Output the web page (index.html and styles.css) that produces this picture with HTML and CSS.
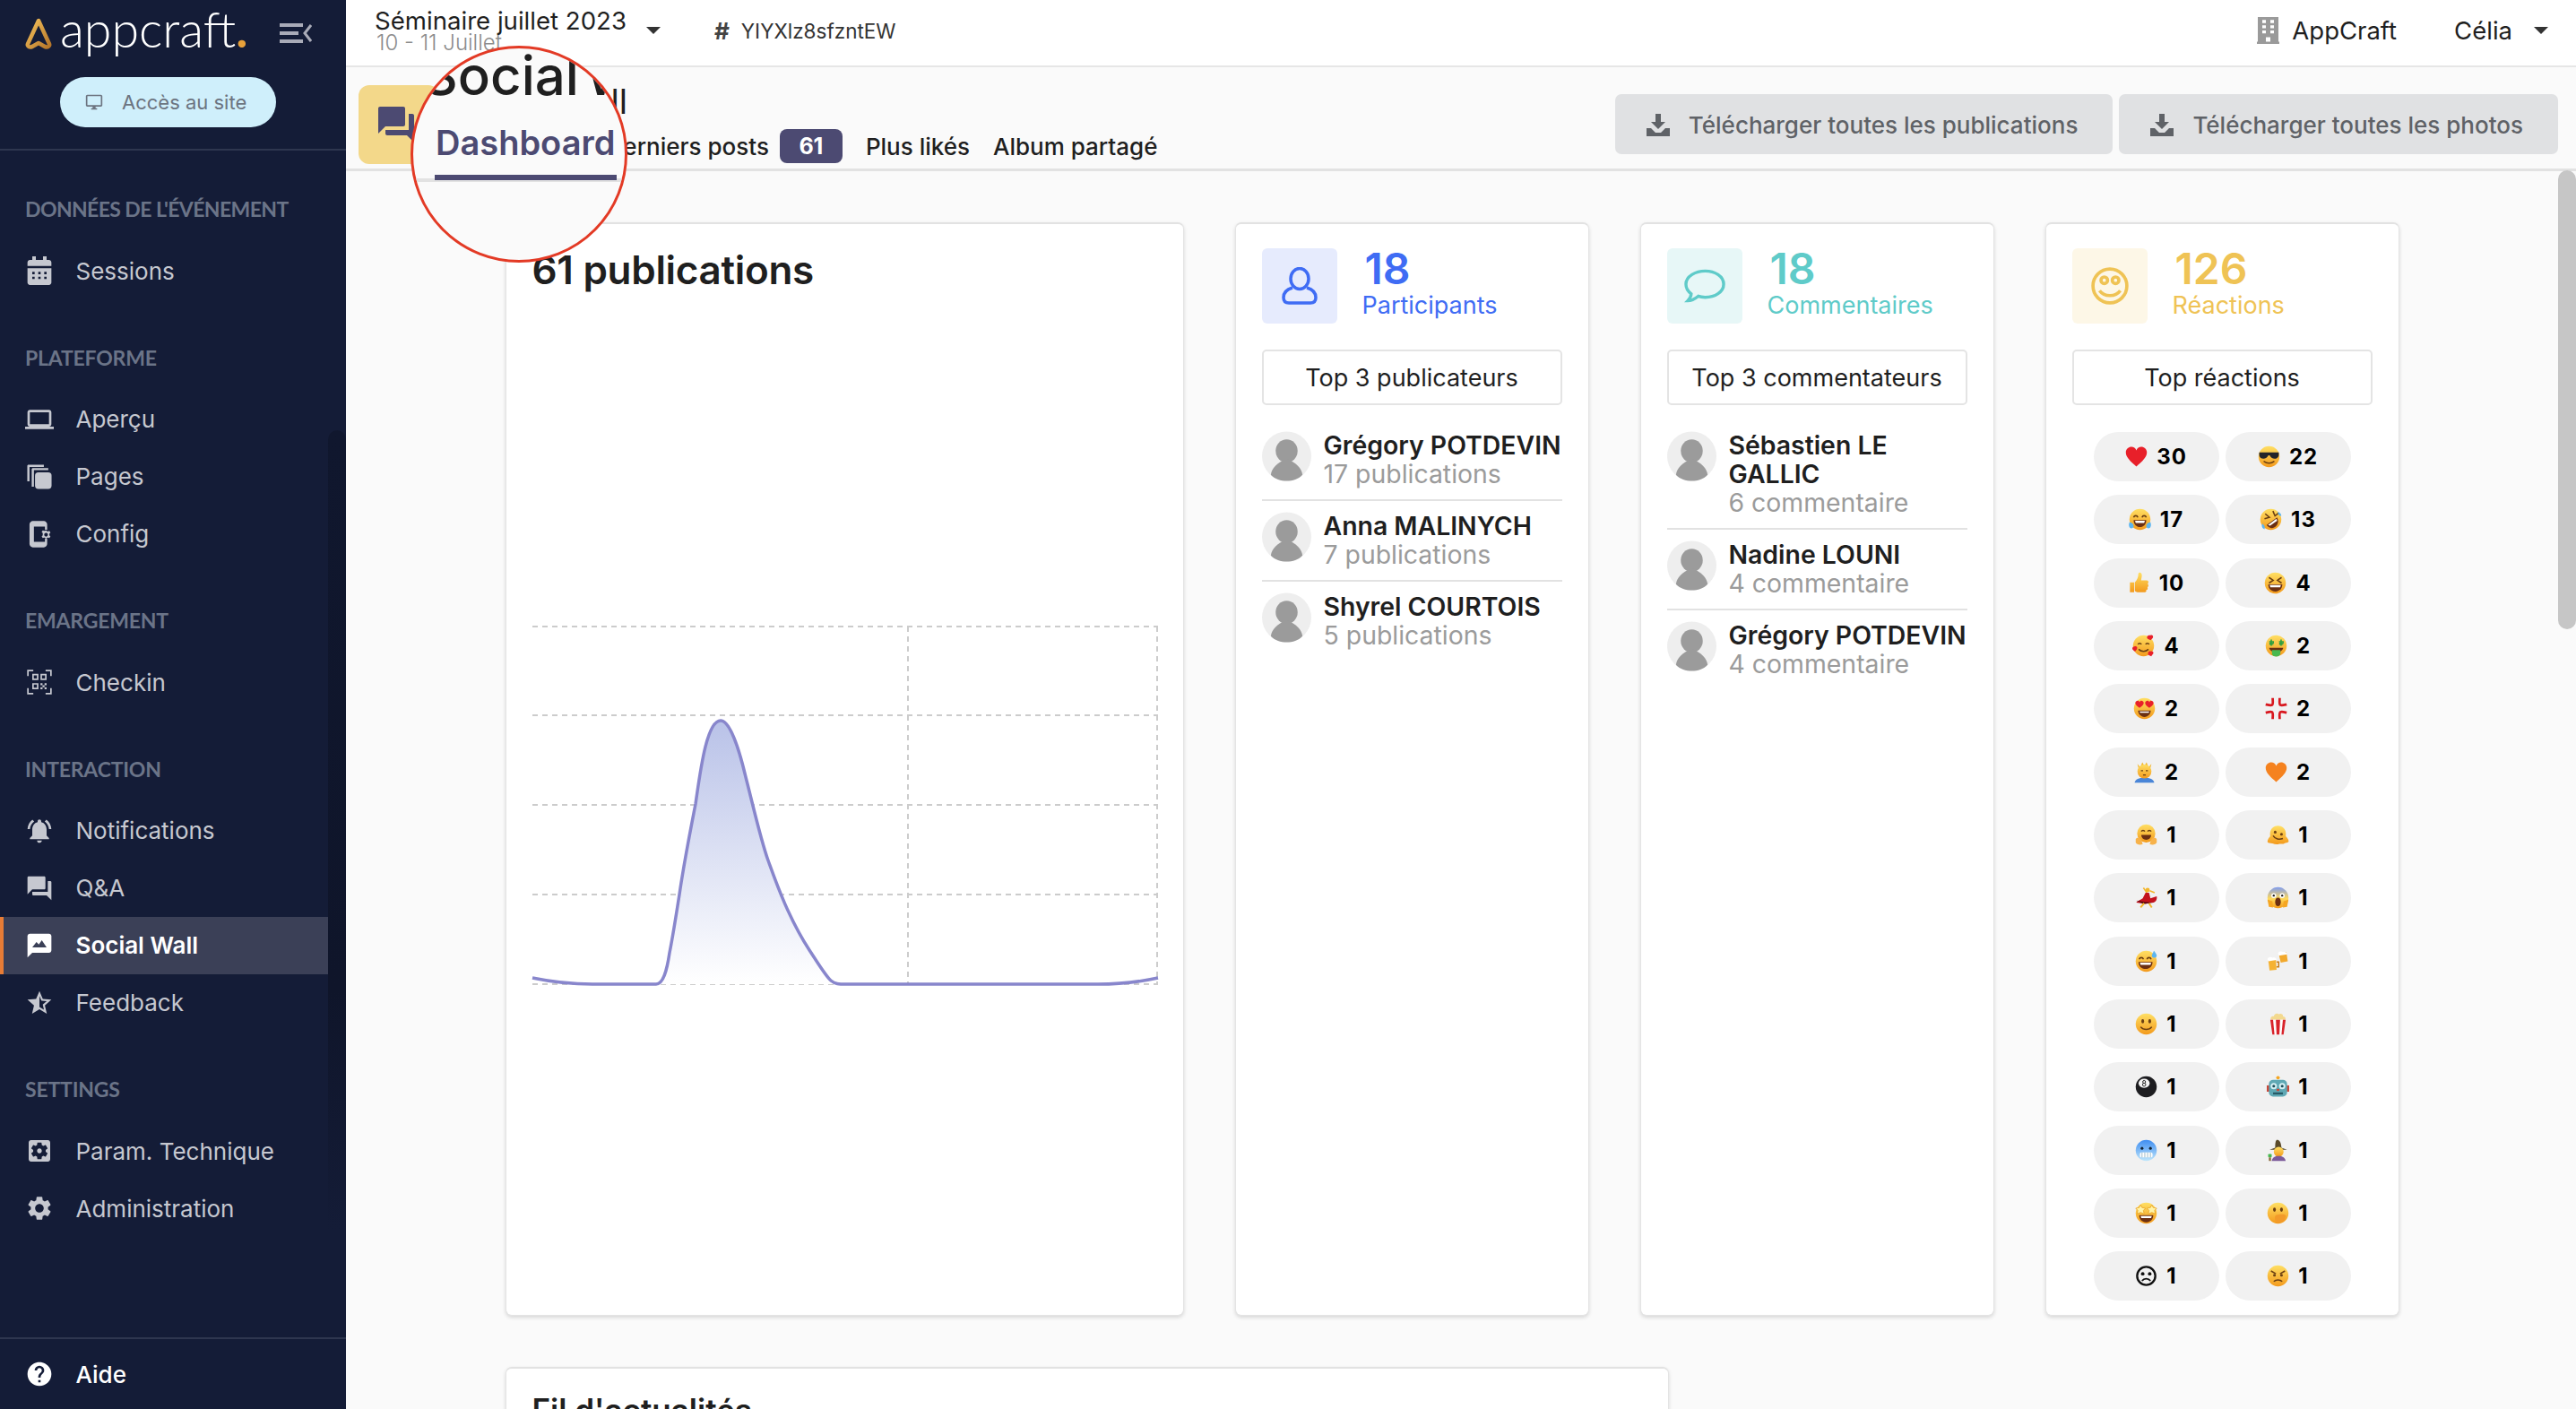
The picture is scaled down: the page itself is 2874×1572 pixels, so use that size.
FILE: index.html
```html
<!DOCTYPE html>
<html lang="fr">
<head>
    <meta charset="UTF-8">
    <title>Social Wall - AppCraft</title>
    <link rel="stylesheet" href="styles.css">
</head>
<body>
    <svg class="defs" width="0" height="0">
        <defs>
            <linearGradient id="gold" x1="0" y1="0" x2="0" y2="1"><stop offset="0" stop-color="#ffdf63"/><stop offset="1" stop-color="#f39a1c"/></linearGradient>
            <linearGradient id="logoGold" x1="0" y1="0" x2="1" y2="1"><stop offset="0" stop-color="#f5c25c"/><stop offset="1" stop-color="#b5762a"/></linearGradient>
            <linearGradient id="chartFill" x1="0" y1="0" x2="0" y2="1"><stop offset="0" stop-color="#b9c2e8"/><stop offset="1" stop-color="#ffffff"/></linearGradient>
            <linearGradient id="iceFace" x1="0" y1="0" x2="0" y2="1"><stop offset="0" stop-color="#3f8df0"/><stop offset="1" stop-color="#bfe6fb"/></linearGradient>
            <linearGradient id="screamFace" x1="0" y1="0" x2="0" y2="1"><stop offset="0" stop-color="#7f9cf0"/><stop offset=".55" stop-color="#ffd95a"/><stop offset="1" stop-color="#f59c1a"/></linearGradient>
            <circle id="face" cx="16" cy="16" r="15" fill="url(#gold)"/>
            <symbol id="e-heart" viewBox="0 0 32 32"><path d="M16 30C8 23 1 17 1 10c0-5 4-8 8-8 3 0 6 2 7 5 1-3 4-5 7-5 4 0 8 3 8 8 0 7-7 13-15 20z" fill="#e8202a"/></symbol>
            <symbol id="e-orange" viewBox="0 0 32 32"><path d="M16 30C8 23 1 17 1 10c0-5 4-8 8-8 3 0 6 2 7 5 1-3 4-5 7-5 4 0 8 3 8 8 0 7-7 13-15 20z" fill="#f5821f"/></symbol>
            <symbol id="e-shades" viewBox="0 0 32 32"><use href="#face"/><path d="M2 10h28v3c0 4-3 6-6 6-3 0-6-2-7-5h-2c-1 3-4 5-7 5-3 0-6-2-6-6z" fill="#23242a"/><path d="M9 23c4 3 10 3 14 0" fill="none" stroke="#6b3f12" stroke-width="2" stroke-linecap="round"/></symbol>
            <symbol id="e-joy" viewBox="0 0 32 32"><use href="#face"/><path d="M7 13c1-3 5-3 6 0M19 13c1-3 5-3 6 0" fill="none" stroke="#6b3f12" stroke-width="2"/><path d="M7 17h18c0 6-4 10-9 10s-9-4-9-10z" fill="#6b2f12"/><path d="M9 18h14l-1 3H10z" fill="#fff"/><path d="M1 20c3 0 6 2 6 6 0 3-5 4-6 1-1-2-1-4 0-7zM31 20c-3 0-6 2-6 6 0 3 5 4 6 1 1-2 1-4 0-7z" fill="#5cb5f0"/></symbol>
            <symbol id="e-rofl" viewBox="0 0 32 32"><use href="#face"/><path d="M8 8l6 5-7 2M19 4l3 7 5-4" fill="none" stroke="#6b3f12" stroke-width="2"/><path d="M10 24L25 13c3 6 1 11-3 14s-9 1-12-3z" fill="#6b2f12"/><path d="M12 24l12-9 1 3-10 7z" fill="#fff"/><path d="M26 5c3 1 5 3 5 6-3 0-5-2-5-6zM4 22c3 2 4 5 3 8-3-1-5-4-3-8z" fill="#5cb5f0"/></symbol>
            <symbol id="e-thumb" viewBox="0 0 32 32"><path d="M3 15h6v14H3zM10 15c3-3 5-7 5-12 0-3 5-3 5 2 0 3-1 5-1 7h8c3 0 3 4 1 5 2 1 2 4 0 5 1 2 0 4-2 4 1 2 0 3-2 3H14c-2 0-4-1-4-2z" fill="url(#gold)"/></symbol>
            <symbol id="e-xd" viewBox="0 0 32 32"><use href="#face"/><path d="M7 8l6 4-6 4M25 8l-6 4 6 4" fill="none" stroke="#6b3f12" stroke-width="2"/><path d="M6 18h20c0 6-4 10-10 10S6 24 6 18z" fill="#6b2f12"/><path d="M8 19h16l-1 3H9z" fill="#fff"/></symbol>
            <symbol id="e-love" viewBox="0 0 32 32"><use href="#face"/><path d="M8 14c1-2 4-2 5 0M19 14c1-2 4-2 5 0M9 21c4 4 10 4 14 0" fill="none" stroke="#6b3f12" stroke-width="2"/><path d="M26 1c2-1 5 1 3 4l-3 3-4-2c-3-3 1-6 4-5zM3 17c2-1 4 0 4 2s-2 4-3 5c-2-1-4-3-4-4 0-2 2-3 3-3zM26 24c2-1 5 1 4 3l-3 4-4-2c-2-3 1-6 3-5z" fill="#e8202a"/></symbol>
            <symbol id="e-money" viewBox="0 0 32 32"><use href="#face"/><path d="M9 7v9M23 7v9" stroke="#2e9e3f" stroke-width="2"/><path d="M6 10h6v2H7v2h5M20 10h6v2h-5v2h5" fill="none" stroke="#2e9e3f" stroke-width="1.5"/><path d="M6 19h20c0 2-2 4-4 5H10c-2-1-4-3-4-5z" fill="#6b2f12"/><path d="M10 22h12v5c0 6-12 6-12 0z" fill="#48b84f"/></symbol>
            <symbol id="e-hearteyes" viewBox="0 0 32 32"><use href="#face"/><path d="M9 15C6 13 3 11 3 8s5-5 6-1c1-4 6-2 6 1s-3 5-6 7zM23 15c-3-2-6-4-6-7s5-5 6-1c1-4 6-2 6 1s-3 5-6 7z" fill="#e8202a"/><path d="M7 19h18c0 5-4 9-9 9s-9-4-9-9z" fill="#6b2f12"/><path d="M9 20h14l-1 2H10z" fill="#fff"/></symbol>
            <symbol id="e-anger" viewBox="0 0 32 32"><path d="M11 1c0 5 1 9-1 10s-5 0-9-1M21 1c0 5-1 9 1 10s5 0 9-1M11 31c0-5 1-9-1-10s-5 0-9 1M21 31c0-5-1-9 1-10s5 0 9 1" fill="none" stroke="#d8181f" stroke-width="3.5"/></symbol>
            <symbol id="e-massage" viewBox="0 0 32 32"><path d="M2 31c1-5 6-7 14-7s13 2 14 7z" fill="#4a86d8"/><path d="M6 4l2 8h16l2-8-4 5-3-7-3 5-3-5-3 7z" fill="#f2b62c"/><circle cx="16" cy="15" r="10" fill="url(#gold)"/><path d="M11 14h3M18 14h3M14 20h4" stroke="#6b3f12" stroke-width="1.5"/></symbol>
            <symbol id="e-hug" viewBox="0 0 32 32"><circle cx="16" cy="14" r="13" fill="url(#gold)"/><path d="M9 11c1-2 4-2 5 0M18 11c1-2 4-2 5 0" fill="none" stroke="#6b3f12" stroke-width="2"/><path d="M9 16h14c0 4-3 7-7 7s-7-3-7-7z" fill="#6b2f12"/><path d="M1 22c2-3 6-2 8 1l2 6c-3 2-9 1-10-2zM31 22c-2-3-6-2-8 1l-2 6c3 2 9 1 10-2z" fill="#f7b24a"/></symbol>
            <symbol id="e-melt" viewBox="0 0 32 32"><path d="M5 18C3 8 10 3 16 3s13 5 11 15c2 2 5 5 4 8-2 2-4 1-6 2-2 2-5 0-8 1-3 1-6 0-9-1-3 0-6 0-7-2 0-3 2-6 4-8z" fill="url(#gold)"/><circle cx="12" cy="12" r="2" fill="#6b3f12"/><circle cx="21" cy="15" r="2" fill="#6b3f12"/><path d="M9 17c3 5 9 6 14 4" fill="none" stroke="#6b3f12" stroke-width="2"/></symbol>
            <symbol id="e-dancer" viewBox="0 0 32 32"><circle cx="18" cy="5" r="3" fill="#f2b62c"/><path d="M12 2l5 7M21 6l7 3" stroke="#f2b62c" stroke-width="2"/><path d="M15 9h5l2 8 9-3c1 5-2 10-8 9l-8 2-13-2c0-2 5-3 9-6z" fill="#c3121d"/><path d="M2 20l12 2 12 1-14 2z" fill="#5b0a0f"/><path d="M13 24l-5 6M20 24l4 6" stroke="#f2b62c" stroke-width="2.5"/></symbol>
            <symbol id="e-scream" viewBox="0 0 32 32"><circle cx="16" cy="16" r="15" fill="url(#screamFace)"/><circle cx="10" cy="13" r="3.5" fill="#fff"/><circle cx="22" cy="13" r="3.5" fill="#fff"/><circle cx="10" cy="13" r="1.5" fill="#222"/><circle cx="22" cy="13" r="1.5" fill="#222"/><ellipse cx="16" cy="22" rx="4" ry="6" fill="#6b2f12"/><path d="M1 19l7 2 1 9-6-1zM31 19l-7 2-1 9 6-1z" fill="#f5a623"/></symbol>
            <symbol id="e-sweat" viewBox="0 0 32 32"><use href="#face"/><path d="M6 13c1-3 5-3 6 0M17 13c1-3 5-3 6 0" fill="none" stroke="#6b3f12" stroke-width="2"/><path d="M5 17h20c0 6-4 10-10 10S5 23 5 17z" fill="#6b2f12"/><path d="M7 18h16l-1 3H8z" fill="#fff"/><path d="M27 1c2 3 4 5 4 7 0 4-7 4-7 0 0-2 2-4 3-7z" fill="#5cb5f0"/></symbol>
            <symbol id="e-beer" viewBox="0 0 32 32"><path d="M17 5l11-2 2 13-10 2z" fill="#f2a92c"/><path d="M16 4c3-3 6-2 7-1 3-1 6 0 6 3l-12 2z" fill="#fff"/><path d="M2 14l11-1 1 15-10 1z" fill="#f5b233"/><path d="M1 13c1-3 5-4 7-2 3-1 6 0 6 3L2 16z" fill="#fff"/><path d="M14 17h3v7h-3" fill="none" stroke="#c97f1b" stroke-width="2"/></symbol>
            <symbol id="e-smile" viewBox="0 0 32 32"><use href="#face"/><ellipse cx="11" cy="12" rx="2" ry="3" fill="#6b3f12"/><ellipse cx="21" cy="12" rx="2" ry="3" fill="#6b3f12"/><path d="M8 20c4 5 12 5 16 0" fill="none" stroke="#6b3f12" stroke-width="2"/></symbol>
            <symbol id="e-popcorn" viewBox="0 0 32 32"><path d="M6 10c-2-4 2-6 4-5 1-4 5-5 7-3 3-2 7 0 6 3 3 0 5 3 3 5z" fill="#f3d98f"/><path d="M5 10h22l-3 21H8z" fill="#fff"/><path d="M5 10h4l2 21H8zM13 10h6l-1 21h-4zM23 10h4l-3 21h-3z" fill="#d8232a"/></symbol>
            <symbol id="e-ball" viewBox="0 0 32 32"><circle cx="16" cy="16" r="15" fill="#1d1d20"/><ellipse cx="13" cy="11" rx="8" ry="6.500" fill="#f4f4f4"/><circle cx="13" cy="9" r="2" fill="none" stroke="#222" stroke-width="1.2"/><circle cx="13" cy="13" r="2.300" fill="none" stroke="#222" stroke-width="1.2"/></symbol>
            <symbol id="e-robot" viewBox="0 0 32 32"><circle cx="16" cy="3" r="2.500" fill="#f5a623"/><rect x="0" y="14" width="4" height="9" fill="#c8483a"/><rect x="28" y="14" width="4" height="9" fill="#c8483a"/><rect x="3" y="6" width="26" height="24" rx="6" fill="#5fa8b4"/><circle cx="10" cy="15" r="4.500" fill="#d6f0f4"/><circle cx="22" cy="15" r="4.500" fill="#d6f0f4"/><circle cx="10" cy="15" r="2" fill="#1d4e5a"/><circle cx="22" cy="15" r="2" fill="#1d4e5a"/><rect x="9" y="24" width="14" height="3" fill="#275a66"/><rect x="14" y="19" width="4" height="3" fill="#c8483a"/></symbol>
            <symbol id="e-cold" viewBox="0 0 32 32"><circle cx="16" cy="16" r="15" fill="url(#iceFace)"/><circle cx="10" cy="13" r="2" fill="#123"/><circle cx="22" cy="13" r="2" fill="#123"/><rect x="7" y="19" width="18" height="7" rx="2" fill="#fff"/><path d="M10 19v7M14 19v7M18 19v7M22 19v7" stroke="#8ab" stroke-width="1"/></symbol>
            <symbol id="e-witch" viewBox="0 0 32 32"><path d="M14 1c4 0 6 2 7 11l8 3H4l8-3c0-4 0-9 2-11z" fill="#5a4a2a"/><circle cx="17" cy="18" r="7" fill="url(#gold)"/><path d="M7 31c1-5 5-7 10-7s9 2 10 7z" fill="#7b5a9a"/><rect x="2" y="21" width="5" height="5" rx="1" fill="#48b84f"/><rect x="3" y="26" width="3" height="5" fill="#8a6a3a"/></symbol>
            <symbol id="e-stars" viewBox="0 0 32 32"><use href="#face"/><path d="M8 4l2 4 5 1-3 3 1 5-5-2-5 2 1-5-3-3 5-1zM24 4l2 4 5 1-3 3 1 5-5-2-5 2 1-5-3-3 5-1z" fill="#fff3a8" stroke="#e8a020" stroke-width="1"/><path d="M6 19h20c0 6-4 10-10 10S6 25 6 19z" fill="#6b2f12"/><path d="M8 20h16l-1 3H9z" fill="#fff"/></symbol>
            <symbol id="e-hush" viewBox="0 0 32 32"><use href="#face"/><ellipse cx="11" cy="11" rx="2" ry="3" fill="#6b3f12"/><ellipse cx="21" cy="11" rx="2" ry="3" fill="#6b3f12"/><path d="M13 19c3-1 8-2 12-1 3 1 3 4 1 5 1 2-1 4-2 4-2 3-9 4-11 1-2-3-2-7 0-9z" fill="#f29a2a"/></symbol>
            <symbol id="e-frown" viewBox="0 0 32 32"><circle cx="16" cy="16" r="13" fill="none" stroke="#111" stroke-width="3"/><circle cx="11" cy="13" r="2.500" fill="#111"/><circle cx="21" cy="13" r="2.500" fill="#111"/><path d="M10 23c3-4 9-4 12 0" fill="none" stroke="#111" stroke-width="2.500"/></symbol>
            <symbol id="e-angry" viewBox="0 0 32 32"><use href="#face"/><path d="M6 9l7 4M26 9l-7 4" stroke="#6b3f12" stroke-width="2"/><circle cx="11" cy="15" r="2" fill="#6b3f12"/><circle cx="21" cy="15" r="2" fill="#6b3f12"/><path d="M10 24c3-3 9-3 12 0" fill="none" stroke="#6b3f12" stroke-width="2"/></symbol>
            <symbol id="avatar" viewBox="0 0 56 56"><circle cx="28" cy="28" r="28" fill="#eeeeee"/><ellipse cx="28" cy="22" rx="12.500" ry="13" fill="#9b9b9b"/><path d="M28 31c-11 4-17 11-18 18 5 5 11 7 18 7s13-2 18-7c-1-7-7-14-18-18z" fill="#9b9b9b"/></symbol>
            <symbol id="download" viewBox="0 0 26 26"><path d="M10 1h6v9h5l-8 8-8-8h5z" fill="currentColor"/><path d="M0 17h5l5 5h6l5-5h5v9H0z" fill="currentColor"/></symbol>
        </defs>
    </svg>

    <aside class="sidebar">
        <div class="brand">
            <svg class="brand-mark" viewBox="0 0 36 36"><path d="M18 4L6 30c-1 3 2 4 5 3l7-4 7 4c3 1 6 0 5-3z" fill="none" stroke="url(#logoGold)" stroke-width="4.500" stroke-linejoin="round"/></svg>
            <span class="brand-name">appcraft<span class="brand-dot">.</span></span>
            <svg class="brand-toggle" viewBox="0 0 36 24"><path d="M0 1h26v4H0zM0 10h21v4H0zM0 19h26v4H0z" fill="#a9abb8"/><path d="M35 3l-7 9 7 9" fill="none" stroke="#a9abb8" stroke-width="3"/></svg>
        </div>
        <a class="site-btn">
            <svg class="site-icon" viewBox="0 0 24 24"><path d="M21 2H3c-1.100 0-2 .9-2 2v12c0 1.100.9 2 2 2h7v2H8v2h8v-2h-2v-2h7c1.100 0 2-.9 2-2V4c0-1.100-.9-2-2-2zm0 14H3V4h18v12z"/></svg>
            Accès au site
        </a>
        <nav class="nav">
            <div class="nav-head nav-head-first">Données de l'événement</div>
            <a class="nav-item"><svg class="nav-icon" viewBox="0 0 24 24"><path d="M6 0h3v3h6V0h3v3h2c1 0 2 1 2 2v3H2V5c0-1 1-2 2-2h2zM2 10h20v12c0 1-1 2-2 2H4c-1 0-2-1-2-2zm4 3v2h2v-2zm5 0v2h2v-2zm5 0v2h2v-2zm-10 4v2h2v-2zm5 0v2h2v-2zm5 0v2h2v-2z" fill-rule="evenodd"/></svg>Sessions</a>

            <div class="nav-head">Plateforme</div>
            <a class="nav-item"><svg class="nav-icon" viewBox="0 0 24 24"><path d="M20 18c1.100 0 1.990-.9 1.990-2L22 6c0-1.100-.9-2-2-2H4c-1.100 0-2 .9-2 2v10c0 1.100.9 2 2 2H0v2h24v-2h-4zM4 6h16v10H4V6z"/></svg>Aperçu</a>
            <a class="nav-item"><svg class="nav-icon" viewBox="-1 -1 26 26"><rect x="8" y="8" width="15" height="15" rx="3"/><path d="M5 21V5c0-.5.5-1 1-1h14v2H7v15zM1 16V2c0-.5.5-1 1-1h14v2H3v13z"/></svg>Pages</a>
            <a class="nav-item"><svg class="nav-icon" viewBox="-1 -1 26 26"><path d="M6 0h10c1.500 0 3 1.500 3 3v5h-2V5H7v14h10v-3h2v5c0 1.500-1.500 3-3 3H6c-1.500 0-3-1.500-3-3V3c0-1.500 1.500-3 3-3z"/><path d="M18 8.500l1.500 1 1.500-.5 1 1.500-1 1v1.500l1 1-1 1.500-1.500-.5-1.500 1-1.500-1-1.500.5-1-1.500 1-1V11l-1-1 1-1.500 1.500.5zm0 2.300a1.700 1.700 0 100 3.400 1.700 1.700 0 000-3.400z" fill-rule="evenodd"/></svg>Config</a>

            <div class="nav-head">Emargement</div>
            <a class="nav-item"><svg class="nav-icon" viewBox="-2 -2 28 28"><path d="M0 6V0h6v1.500H1.500V6zM18 0h6v6h-1.500V1.500H18zM0 18h1.500v4.500H6V24H0zM24 18v6h-6v-1.500h4.500V18z"/><path d="M5 4h6v6H5zm1.500 1.500v3h3v-3zM13 4h6v6h-6zm1.500 1.500v3h3v-3zM5 13h6v6H5zm1.500 1.500v3h3v-3z" fill-rule="evenodd"/><path d="M13 13h2v2h-2zM17 13h2v2h-2zM15 15h2v2h-2zM13 17h2v2h-2zM17 17h2v2h-2z"/></svg>Checkin</a>

            <div class="nav-head">Interaction</div>
            <a class="nav-item"><svg class="nav-icon" viewBox="0 0 24 24"><path d="M7.580 4.080L6.150 2.650C3.750 4.480 2.170 7.300 2.030 10.500h2c.15-2.650 1.510-4.970 3.550-6.420zm12.390 6.420h2c-.15-3.200-1.730-6.020-4.120-7.850l-1.420 1.430c2.020 1.450 3.390 3.770 3.540 6.420zM18 11c0-3.070-1.640-5.640-4.500-6.320V4c0-.83-.67-1.500-1.500-1.500s-1.500.67-1.500 1.500v.68C7.630 5.360 6 7.920 6 11v5l-2 2v1h16v-1l-2-2v-5zm-6 11c.14 0 .27-.01.4-.04.65-.14 1.180-.58 1.440-1.180.1-.24.15-.5.15-.78h-4c.01 1.100.9 2 2.010 2z"/></svg>Notifications</a>
            <a class="nav-item"><svg class="nav-icon" viewBox="0 0 24 24"><path d="M21 6h-2v9H6v2c0 .55.45 1 1 1h11l4 4V7c0-.55-.45-1-1-1zm-4 6V3c0-.55-.45-1-1-1H3c-.55 0-1 .45-1 1v14l4-4h10c.55 0 1-.45 1-1z"/></svg>Q&amp;A</a>
            <a class="nav-item nav-item-active"><svg class="nav-icon" viewBox="0 0 24 24"><path d="M20 2H4c-1.100 0-2 .9-2 2v18l4-4h14c1.100 0 2-.9 2-2V4c0-1.100-.9-2-2-2z"/><path d="M6 13.500l3.500-4.500 2 2 2.500-3.500 4 6z" fill="#3b4057"/></svg>Social Wall</a>
            <a class="nav-item"><svg class="nav-icon" viewBox="0 0 24 24"><path d="M22 9.240l-7.190-.62L12 2 9.190 8.630 2 9.240l5.460 4.730L5.820 21 12 17.270 18.180 21l-1.630-7.030L22 9.240zM12 15.400V6.100l1.710 4.040 4.380.38-3.320 2.880 1 4.280L12 15.400z"/></svg>Feedback</a>

            <div class="nav-head">Settings</div>
            <a class="nav-item"><svg class="nav-icon" viewBox="0 0 24 24"><path d="M12 10c-1.100 0-2 .9-2 2s.9 2 2 2 2-.9 2-2-.9-2-2-2zm7-7H5c-1.110 0-2 .9-2 2v14c0 1.100.89 2 2 2h14c1.110 0 2-.9 2-2V5c0-1.100-.89-2-2-2zm-1.750 9c0 .23-.02.46-.05.68l1.480 1.160c.13.11.17.3.08.45l-1.400 2.420c-.09.15-.27.21-.43.15l-1.740-.7c-.36.28-.76.51-1.180.69l-.26 1.850c-.03.17-.18.3-.35.3h-2.800c-.17 0-.32-.13-.35-.29l-.26-1.850c-.43-.18-.82-.41-1.180-.69l-1.740.7c-.16.06-.34 0-.43-.15l-1.400-2.420c-.09-.15-.05-.34.08-.45l1.480-1.160c-.03-.23-.05-.46-.05-.69 0-.23.02-.46.05-.68l-1.480-1.160c-.13-.11-.17-.3-.08-.45l1.400-2.420c.09-.15.27-.21.43-.15l1.740.7c.36-.28.76-.51 1.180-.69l.26-1.850c.03-.17.18-.3.35-.3h2.800c.17 0 .32.13.35.29l.26 1.850c.43.18.82.41 1.180.69l1.740-.7c.16-.06.34 0 .43.15l1.400 2.420c.09.15.05.34-.08.45l-1.480 1.160c.03.23.05.46.05.69z"/></svg>Param. Technique</a>
            <a class="nav-item"><svg class="nav-icon" viewBox="0 0 24 24"><path d="M19.140 12.940c.04-.3.06-.61.06-.94 0-.32-.02-.64-.07-.94l2.030-1.580c.18-.14.23-.41.12-.61l-1.920-3.320c-.12-.22-.37-.29-.59-.22l-2.390.96c-.5-.38-1.030-.7-1.620-.94l-.36-2.540c-.04-.24-.24-.41-.48-.41h-3.840c-.24 0-.43.17-.47.41l-.36 2.540c-.59.24-1.130.57-1.620.94l-2.390-.96c-.22-.08-.47 0-.59.22L2.740 8.870c-.12.21-.08.47.12.61l2.030 1.580c-.05.3-.09.63-.09.94s.02.64.07.94l-2.030 1.580c-.18.14-.23.41-.12.61l1.920 3.320c.12.22.37.29.59.22l2.390-.96c.5.38 1.030.7 1.620.94l.36 2.540c.05.24.24.41.48.41h3.840c.24 0 .44-.17.47-.41l.36-2.540c.59-.24 1.130-.56 1.620-.94l2.390.96c.22.08.47 0 .59-.22l1.920-3.320c.12-.22.07-.47-.12-.61l-2.010-1.580zM12 15.600c-1.980 0-3.600-1.620-3.600-3.600s1.620-3.600 3.600-3.600 3.600 1.620 3.600 3.600-1.620 3.600-3.600 3.600z"/></svg>Administration</a>
        </nav>
        <div class="side-foot">
            <a class="nav-item nav-item-help"><svg class="nav-icon" viewBox="0 0 24 24"><path d="M12 2C6.480 2 2 6.480 2 12s4.480 10 10 10 10-4.480 10-10S17.520 2 12 2zm1 17h-2v-2h2v2zm2.070-7.750l-.9.92C13.450 12.900 13 13.500 13 15h-2v-.5c0-1.100.45-2.100 1.170-2.830l1.240-1.260c.37-.36.59-.86.59-1.410 0-1.100-.9-2-2-2s-2 .9-2 2H8c0-2.210 1.790-4 4-4s4 1.790 4 4c0 .88-.36 1.680-.93 2.250z"/></svg>Aide</a>
        </div>
        <div class="side-track"></div>
    </aside>

    <main class="main">
        <header class="topbar">
            <div class="event">
                <div class="event-name">Séminaire juillet 2023</div>
                <div class="event-date">10 - 11 Juillet</div>
            </div>
            <span class="caret caret-event"></span>
            <span class="event-code"><b class="hash">#</b>YIYXlz8sfzntEW</span>
            <span class="org">
                <svg class="org-icon" viewBox="0 0 25 36" preserveAspectRatio="none"><path d="M1 0h23v33H15v-6h-5v6H1zM6 4v4h4V4zm9 0v4h4V4zM6 11v4h4v-4zm9 0v4h4v-4zM6 18v4h4v-4zm9 0v4h4v-4zM0 33h25v3H0z" fill-rule="evenodd"/></svg>
                AppCraft
            </span>
            <span class="user">Célia</span>
            <span class="caret caret-user"></span>
        </header>

        <section class="page-head">
            <div class="page-tile">
                <svg class="page-tile-icon" viewBox="0 0 24 24"><path d="M21 6h-2v9H6v2c0 .55.45 1 1 1h11l4 4V7c0-.55-.45-1-1-1zm-4 6V3c0-.55-.45-1-1-1H3c-.55 0-1 .45-1 1v14l4-4h10c.55 0 1-.45 1-1z"/></svg>
            </div>
            <div class="page-title-col">
                <h1 class="page-title">Social Wall</h1>
                <div class="tabs">
                    <span class="tab tab-active">Dashboard</span>
                    <span class="tab">Derniers posts</span>
                    <span class="tab-badge">61</span>
                    <span class="tab">Plus likés</span>
                    <span class="tab">Album partagé</span>
                </div>
            </div>
            <div class="page-actions">
                <a class="dl-btn"><svg class="dl-icon"><use href="#download"/></svg>Télécharger toutes les publications</a>
                <a class="dl-btn"><svg class="dl-icon"><use href="#download"/></svg>Télécharger toutes les photos</a>
            </div>
        </section>

        <section class="content">
            <div class="stats">
                <article class="card card-chart">
                    <h2 class="card-title">61 publications</h2>
                    <svg class="chart" viewBox="0 0 698 410" width="698" height="410">
                        <g class="chart-grid">
                            <path d="M0 1H698M0 100H698M0 200H698M0 300H698M0 400H698M419 1V400M697 1V400"/>
                        </g>
                        <path class="chart-area" d="M138 400C146 400 150 385 153 365C157 345 160 325 164 300C169 265 176 230 182 199C187 165 194 106 210 106C220 106 230 135 238 169C246 200 255 240 263 262S285 325 309 362S332 400 350 400Z"/>
                        <path class="chart-line" d="M0 393C24 398 46 400 67 400L138 400C146 400 150 385 153 365C157 345 160 325 164 300C169 265 176 230 182 199C187 165 194 106 210 106C220 106 230 135 238 169C246 200 255 240 263 262S285 325 309 362S332 400 350 400L631 400C650 400 675 398 698 393"/>
                    </svg>
                </article>

                <article class="card card-stat card-blue">
                    <div class="stat">
                        <div class="stat-tile">
                            <svg class="stat-icon" viewBox="0 0 42 42"><ellipse cx="21" cy="13" rx="10" ry="11.500"/><path d="M13 23C6 25 3 29 3 34c0 4 2 6 6 6h24c4 0 6-2 6-6 0-5-3-9-10-11"/></svg>
                        </div>
                        <div>
                            <div class="stat-num">18</div>
                            <div class="stat-label">Participants</div>
                        </div>
                    </div>
                    <div class="top-btn">Top 3 publicateurs</div>
                    <ul class="people">
                        <li class="person"><svg class="avatar"><use href="#avatar"/></svg><div class="person-body"><div class="person-name">Grégory POTDEVIN</div><div class="person-sub">17 publications</div></div></li>
                        <li class="person"><svg class="avatar"><use href="#avatar"/></svg><div class="person-body"><div class="person-name">Anna MALINYCH</div><div class="person-sub">7 publications</div></div></li>
                        <li class="person"><svg class="avatar"><use href="#avatar"/></svg><div class="person-body"><div class="person-name">Shyrel COURTOIS</div><div class="person-sub">5 publications</div></div></li>
                    </ul>
                </article>

                <article class="card card-stat card-teal">
                    <div class="stat">
                        <div class="stat-tile">
                            <svg class="stat-icon" viewBox="0 0 47 38"><path d="M24 2c11 0 21 6 21 15s-10 15-21 15c-3 0-6-.5-8-1.300C12 34 8 36 4 36c2-2 4-5 4-8-4-3-6-7-6-11C2 8 13 2 24 2z"/></svg>
                        </div>
                        <div>
                            <div class="stat-num">18</div>
                            <div class="stat-label">Commentaires</div>
                        </div>
                    </div>
                    <div class="top-btn">Top 3 commentateurs</div>
                    <ul class="people">
                        <li class="person"><svg class="avatar"><use href="#avatar"/></svg><div class="person-body"><div class="person-name">Sébastien LE GALLIC</div><div class="person-sub">6 commentaire</div></div></li>
                        <li class="person"><svg class="avatar"><use href="#avatar"/></svg><div class="person-body"><div class="person-name">Nadine LOUNI</div><div class="person-sub">4 commentaire</div></div></li>
                        <li class="person"><svg class="avatar"><use href="#avatar"/></svg><div class="person-body"><div class="person-name">Grégory POTDEVIN</div><div class="person-sub">4 commentaire</div></div></li>
                    </ul>
                </article>

                <article class="card card-stat card-gold">
                    <div class="stat">
                        <div class="stat-tile">
                            <svg class="stat-icon stat-icon-smile" viewBox="0 0 40 40"><circle cx="20" cy="20" r="18"/><path d="M9 25c5 7 17 7 22 0"/><circle cx="14" cy="14" r="3.500"/><circle cx="26" cy="14" r="3.500"/></svg>
                        </div>
                        <div>
                            <div class="stat-num">126</div>
                            <div class="stat-label">Réactions</div>
                        </div>
                    </div>
                    <div class="top-btn">Top réactions</div>
                    <div class="reactions">
                        <span class="pill"><svg class="emo"><use href="#e-heart"/></svg>30</span>
                        <span class="pill"><svg class="emo"><use href="#e-shades"/></svg>22</span>
                        <span class="pill"><svg class="emo"><use href="#e-joy"/></svg>17</span>
                        <span class="pill"><svg class="emo"><use href="#e-rofl"/></svg>13</span>
                        <span class="pill"><svg class="emo"><use href="#e-thumb"/></svg>10</span>
                        <span class="pill"><svg class="emo"><use href="#e-xd"/></svg>4</span>
                        <span class="pill"><svg class="emo"><use href="#e-love"/></svg>4</span>
                        <span class="pill"><svg class="emo"><use href="#e-money"/></svg>2</span>
                        <span class="pill"><svg class="emo"><use href="#e-hearteyes"/></svg>2</span>
                        <span class="pill"><svg class="emo"><use href="#e-anger"/></svg>2</span>
                        <span class="pill"><svg class="emo"><use href="#e-massage"/></svg>2</span>
                        <span class="pill"><svg class="emo"><use href="#e-orange"/></svg>2</span>
                        <span class="pill"><svg class="emo"><use href="#e-hug"/></svg>1</span>
                        <span class="pill"><svg class="emo"><use href="#e-melt"/></svg>1</span>
                        <span class="pill"><svg class="emo"><use href="#e-dancer"/></svg>1</span>
                        <span class="pill"><svg class="emo"><use href="#e-scream"/></svg>1</span>
                        <span class="pill"><svg class="emo"><use href="#e-sweat"/></svg>1</span>
                        <span class="pill"><svg class="emo"><use href="#e-beer"/></svg>1</span>
                        <span class="pill"><svg class="emo"><use href="#e-smile"/></svg>1</span>
                        <span class="pill"><svg class="emo"><use href="#e-popcorn"/></svg>1</span>
                        <span class="pill"><svg class="emo"><use href="#e-ball"/></svg>1</span>
                        <span class="pill"><svg class="emo"><use href="#e-robot"/></svg>1</span>
                        <span class="pill"><svg class="emo"><use href="#e-cold"/></svg>1</span>
                        <span class="pill"><svg class="emo"><use href="#e-witch"/></svg>1</span>
                        <span class="pill"><svg class="emo"><use href="#e-stars"/></svg>1</span>
                        <span class="pill"><svg class="emo"><use href="#e-hush"/></svg>1</span>
                        <span class="pill"><svg class="emo"><use href="#e-frown"/></svg>1</span>
                        <span class="pill"><svg class="emo"><use href="#e-angry"/></svg>1</span>
                    </div>
                </article>
            </div>

            <article class="card card-feed">
                <h2 class="card-title card-title-feed">Fil d'actualités</h2>
            </article>
        </section>

        <div class="scroll-thumb"></div>
    </main>

    <!-- loupe posee sur l'onglet Dashboard -->
    <div class="loupe">
        <div class="loupe-title">Social Wall</div>
        <div class="loupe-rule"></div>
        <div class="loupe-tab">Dashboard</div>
        <div class="loupe-underline"></div>
    </div>
</body>
</html>
```

FILE: styles.css
```css
* {
    box-sizing: border-box;
}
html, body {
    height: 100%;
}
body {
    margin: 0;
    display: flex;
    height: 1572px;
    overflow: hidden;
    font-family: Inter, "Noto Sans", sans-serif;
    color: #1f1f1f;
    background: #fafafa;
}
h1, h2, ul {
    margin: 0;
    padding: 0;
}
.defs {
    position: absolute;
}

/* sidebar */
.sidebar {
    position: relative;
    flex: 0 0 386px;
    display: flex;
    flex-direction: column;
    background: #141c37;
}
.brand {
    display: flex;
    align-items: center;
    height: 74px;
    padding: 0 38px 0 25px;
}
.brand-mark {
    width: 36px;
    height: 36px;
    flex: none;
}
.brand-name {
    margin: -10px 0 0 6px;
    font-family: Lato, sans-serif;
    font-weight: 300;
    font-size: 55.5px;
    line-height: 60px;
    color: #fff;
}
.brand-dot {
    color: #e8a13a;
    font-weight: 700;
}
.brand-toggle {
    width: 36px;
    height: 24px;
    margin-left: auto;
    flex: none;
}
.site-btn {
    display: flex;
    align-items: center;
    margin: 12px 0 0 67px;
    width: 241px;
    height: 56px;
    padding-left: 28px;
    border-radius: 28px;
    background: #cfeffb;
    color: #6c7480;
    font-size: 22px;
}
.site-icon {
    width: 20px;
    height: 20px;
    margin-right: 21px;
    fill: #6c7480;
}
.nav {
    margin-top: 24px;
    border-top: 2px solid #2e364f;
}
.nav-head {
    height: 32px;
    margin: 48.5px 0 21px;
    padding-left: 28px;
    font-family: Lato, sans-serif;
    font-weight: 700;
    font-size: 23px;
    line-height: 32px;
    letter-spacing: -0.2px;
    text-transform: uppercase;
    color: #6b7488;
}
.nav-head-first {
    margin-top: 49px;
    letter-spacing: -0.6px;
}
.nav-item {
    display: flex;
    align-items: center;
    height: 64px;
    width: 366px;
    padding-left: 28px;
    font-size: 26px;
    color: #c6c8d0;
}
.nav-icon {
    width: 32px;
    height: 32px;
    margin-right: 24.5px;
    flex: none;
    fill: currentColor;
}
.nav-item-active {
    padding-left: 24px;
    border-left: 4px solid #e77c36;
    background: #3b4057;
    color: #fff;
    font-weight: 600;
}
.side-foot {
    margin-top: auto;
    height: 80px;
    display: flex;
    align-items: center;
    border-top: 2px solid #2e364f;
}
.nav-item-help {
    color: #fff;
    font-weight: 500;
}
.side-track {
    position: absolute;
    right: 0;
    top: 480px;
    bottom: 200px;
    width: 20px;
    border-radius: 10px 10px 0 0;
    background: linear-gradient(#10172e, #0f152a 70%, #141c37);
}

/* barre du haut */
.main {
    position: relative;
    flex: 1;
    min-width: 0;
    display: flex;
    flex-direction: column;
}
.topbar {
    display: flex;
    align-items: flex-start;
    height: 75px;
    flex: none;
    padding-left: 32px;
    background: #fff;
    border-bottom: 2px solid #e6e6e6;
}
.event {
    padding-top: 9px;
}
.event-name {
    font-size: 27.6px;
    line-height: 28px;
}
.event-date {
    padding-left: 2px;
    font-size: 24px;
    line-height: 22px;
    font-weight: 300;
    color: #8c8c8c;
}
.caret {
    width: 0;
    height: 0;
    border-left: 8px solid transparent;
    border-right: 8px solid transparent;
    border-top: 8px solid #333;
    margin-top: 30px;
}
.caret-event {
    margin-left: 22px;
}
.event-code {
    display: flex;
    align-items: center;
    height: 68px;
    margin-left: 60px;
    font-size: 22.5px;
    color: #333;
}
.hash {
    margin-right: 13px;
    font-size: 26px;
    color: #444;
}
.org {
    display: flex;
    align-items: center;
    height: 68px;
    margin-left: auto;
    font-size: 27.5px;
}
.org-icon {
    width: 25px;
    height: 30px;
    margin-right: 14px;
    fill: #9a9a9a;
}
.user {
    height: 68px;
    line-height: 68px;
    margin-left: 64px;
    font-size: 27.5px;
}
.caret-user {
    margin: 30px 31px 0 24px;
}

/* entete de page */
.page-head {
    display: flex;
    align-items: flex-start;
    height: 116px;
    flex: none;
    padding-left: 14px;
    border-bottom: 3px solid #e2e2e2;
    background: #fafafa;
}
.page-tile {
    flex: none;
    display: flex;
    align-items: center;
    width: 90px;
    height: 88px;
    margin-top: 20px;
    padding-left: 18px;
    border-radius: 12px;
    background: #f3d88a;
}
.page-tile-icon {
    width: 48px;
    height: 48px;
    fill: #4c4a72;
}
.page-title-col {
    margin: 14px 0 0 13px;
}
.page-title {
    font-size: 38.5px;
    line-height: 48px;
    font-weight: 400;
}
.tabs {
    display: flex;
    align-items: center;
    margin-top: 7px;
    height: 38px;
}
.tab {
    font-size: 26px;
    font-weight: 500;
    margin-right: 26px;
    white-space: nowrap;
}
.tab-active {
    margin-right: 38px;
}
.tab-badge {
    width: 70px;
    height: 38px;
    margin: 0 26px 0 -14px;
    border-radius: 8px;
    background: #4c4a72;
    color: #fff;
    font-size: 25px;
    font-weight: 700;
    line-height: 38px;
    text-align: center;
}
.page-actions {
    display: flex;
    gap: 7px;
    margin: 30px 20px 0 auto;
}
.dl-btn {
    display: flex;
    align-items: center;
    height: 67px;
    padding: 1px 39px 0 35px;
    border-radius: 7px;
    background: #e0e1e3;
    color: #5f6267;
    font-size: 26px;
    font-weight: 500;
    white-space: nowrap;
}
.dl-icon {
    width: 26px;
    height: 26px;
    margin-right: 21px;
}

/* contenu */
.content {
    flex: 1;
    min-height: 0;
    padding: 57px 0 0 178px;
    overflow: hidden;
}
.stats {
    display: grid;
    grid-template-columns: 757px 395px 395px 395px;
    grid-template-rows: 1220px;
    gap: 57px;
}
.card {
    background: #fff;
    border: 1px solid #e4e4e4;
    border-top: 2px solid #e2e2e2;
    border-radius: 7px;
    box-shadow: 0 2px 4px rgba(0,0,0,0.14);
}
.card-chart {
    padding: 25px 28.5px;
}
.card-title {
    font-size: 44px;
    line-height: 52px;
    font-weight: 600;
    letter-spacing: -0.3px;
}
.card-title-feed {
    font-size: 35px;
    letter-spacing: 0;
}
.chart {
    display: block;
    margin-top: 371px;
    overflow: visible;
}
.chart-grid path {
    fill: none;
    stroke: #cccccc;
    stroke-width: 2;
    stroke-dasharray: 6 5;
}
.chart-area {
    fill: url(#chartFill);
}
.chart-line {
    fill: none;
    stroke: #8886cc;
    stroke-width: 3.5;
}
.card-feed {
    width: 1298px;
    height: 300px;
    margin-top: 57px;
    padding: 20px 28.5px;
}
.card-stat {
    padding: 27px 29.5px 0 28.5px;
}
.card-blue {
    --tint: #3f6cf4;
    --tint-bg: #e6ebfd;
}
.card-teal {
    --tint: #5fcbc9;
    --tint-bg: #e7f7f7;
}
.card-gold {
    --tint: #efc355;
    --tint-bg: #fdf7e7;
}
.stat {
    display: flex;
    gap: 28px;
}
.stat-tile {
    flex: none;
    display: flex;
    align-items: center;
    justify-content: center;
    width: 84px;
    height: 84px;
    border-radius: 6px;
    background: var(--tint-bg);
}
.stat-icon {
    width: 46px;
    height: 42px;
    fill: none;
    stroke: var(--tint);
    stroke-width: 3.5;
}
.stat-icon-smile {
    width: 42px;
}
.stat-num {
    padding-left: 3px;
    font-size: 48px;
    line-height: 46px;
    font-weight: 600;
    color: var(--tint);
}
.stat-label {
    font-size: 27px;
    line-height: 36px;
    color: var(--tint);
}
.top-btn {
    height: 62px;
    margin-top: 29px;
    border: 2px solid #e4e4e4;
    border-radius: 5px;
    font-size: 27px;
    line-height: 60px;
    text-align: center;
}
.people {
    list-style: none;
    margin-top: 29px;
}
.person {
    display: flex;
    gap: 14px;
    padding-bottom: 12px;
    margin-bottom: 12px;
    border-bottom: 2px solid #e2e2e2;
}
.person:last-child {
    border-bottom: 0;
}
.avatar {
    flex: none;
    width: 55px;
    height: 56px;
}
.person-name {
    font-size: 28.4px;
    line-height: 32px;
    font-weight: 600;
}
.person-sub {
    font-size: 28.4px;
    line-height: 32px;
    color: #9b9b9b;
}
.reactions {
    display: grid;
    grid-template-columns: 140px 140px;
    justify-content: center;
    gap: 15.35px 7px;
    margin-top: 30px;
}
.pill {
    display: flex;
    align-items: center;
    justify-content: center;
    gap: 10px;
    height: 55px;
    border-radius: 28px;
    background: #f1f1f1;
    color: #000;
    font-size: 24px;
    font-weight: 700;
    letter-spacing: 1px;
}
.emo {
    width: 25px;
    height: 25px;
}
.scroll-thumb {
    position: absolute;
    right: 0;
    top: 190px;
    width: 20px;
    height: 512px;
    border-radius: 10px;
    background: #c6c6c6;
}

/* loupe */
.loupe {
    position: absolute;
    left: 458px;
    top: 51px;
    width: 242px;
    height: 242px;
    border: 3px solid #e33a25;
    border-radius: 50%;
    background: #fafafa;
    overflow: hidden;
}
.loupe-title {
    position: absolute;
    left: 11px;
    top: -6px;
    font-size: 60px;
    line-height: 72px;
    font-weight: 500;
    word-spacing: -9px;
    white-space: nowrap;
}
.loupe-rule {
    position: absolute;
    left: 0;
    right: 0;
    top: 145px;
    height: 4px;
    background: #e2e2e2;
}
.loupe-tab {
    position: absolute;
    left: 25px;
    top: 80px;
    font-size: 38px;
    line-height: 50px;
    font-weight: 600;
    color: #4c4a72;
}
.loupe-underline {
    position: absolute;
    left: 24px;
    top: 141px;
    width: 203px;
    height: 6px;
    background: #4c4a72;
}
```
